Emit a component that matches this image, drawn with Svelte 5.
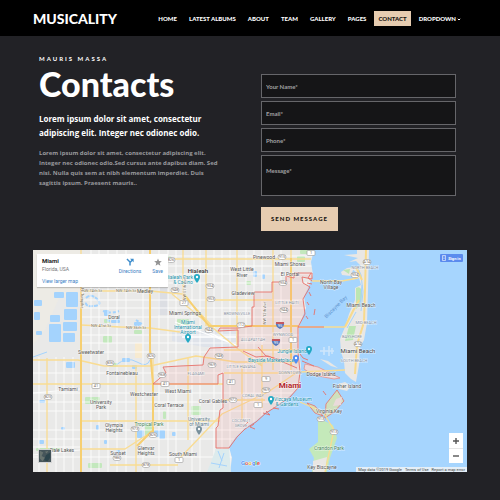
<script>
  const links = ['Home', 'Latest Albums', 'About', 'Team', 'Gallery', 'Pages', 'Contact', 'Dropdown'];

  const fields = [
    { id: 'name', label: 'Your Name*', type: 'text' },
    { id: 'email', label: 'Email*', type: 'email' },
    { id: 'phone', label: 'Phone*', type: 'tel' }
  ];

  // Minor street grid
  const streetsX = [39, 56, 64, 73, 91, 99, 108, 117, 126, 143, 159, 168, 176, 192, 200, 214, 222, 230, 246, 254, 262, 281];
  const streetsY = [256, 266, 274, 283, 300, 308, 317, 335, 343, 352, 373, 393, 402, 411, 430, 439, 457];

  const mainRoads = [
    'M81 250V472', 'M47 358V472', 'M150 250V345L153 384V435', 'M136 365V472', 'M183 250V300',
    'M206 250V326', 'M237 250V345', 'M273 250V370', 'M291 250V370', 'M188 358V440', 'M242 365V420',
    'M262 345V408', 'M33 360H78L104 366H150L196 356L236 362H298', 'M81 291H150L182 294L212 326H298',
    'M170 259H311', 'M33 384H223', 'M81 421H220', 'M81 449H125L153 431V358', 'M110 465H178',
    'M81 325L120 327L150 328L180 332', 'M172 294L206 322L238 349L262 366', 'M206 300H272',
    'M224 350H298', 'M224 373H298', 'M180 458L222 414L268 392L299 371', 'M222 400H265',
    'M298 327H345', 'M300 372L345 370', 'M312 281H342L358 278', 'M300 402L323 412L334 430L325 472'
  ];

  const water = [
    [34, 300, 8, 6], [34, 312, 6, 8], [54, 292, 10, 6], [66, 292, 12, 15], [64, 309, 13, 11], [50, 315, 10, 7],
    [49, 324, 12, 18], [63, 322, 14, 9], [63, 333, 12, 9], [36, 331, 6, 4], [104, 310, 5, 6], [111, 320, 9, 3],
    [134, 322, 7, 4], [137, 430, 7, 8], [154, 430, 5, 7], [159, 430, 6, 9], [96, 425, 3, 5], [66, 362, 9, 6],
    [122, 358, 8, 4], [61, 427, 4, 3], [132, 365, 5, 4], [39, 400, 6, 3], [253, 271, 4, 6], [262, 274, 3, 5],
    [104, 440, 3, 4], [116, 450, 4, 3], [39, 440, 5, 4], [172, 432, 4, 4]
  ];

  const parks = [
    [85, 397, 15, 7], [145, 424, 8, 12], [103, 336, 9, 7], [104, 319, 6, 4], [134, 330, 8, 4], [88, 463, 14, 5],
    [191, 406, 10, 9], [163, 411, 3, 8], [297, 256, 8, 6], [300, 250, 12, 4], [36, 448, 24, 3], [177, 319, 12, 6],
    [258, 361, 4, 4], [246, 281, 5, 4], [165, 256, 6, 4], [110, 363, 8, 4]
  ];

  const labels = [
    ['Hialeah', 198, 273, 'city'], ['Medley', 145, 293, 'town'], ['Doral', 114, 319, 'town'],
    ['Sweetwater', 91, 354, 'town'], ['Pinewood', 264, 259, 'town'], ['Miami Shores', 290, 266, 'town'],
    ['El Portal', 290, 276, 'town'], ['West Little', 242, 271, 'town'], ['River', 242, 277, 'town'],
    ['Gladeview', 243, 295, 'town'], ['Miami Springs', 185, 315, 'town'], ['Fontainebleau', 122, 375, 'town'],
    ['Tamiami', 68, 391, 'town'], ['Westchester', 144, 396, 'town'], ['West Miami', 178, 393, 'town'],
    ['Coral Terrace', 169, 407, 'town'], ['University', 101, 404, 'town'], ['Park', 101, 409, 'town'],
    ['Olympia', 114, 427, 'town'], ['Heights', 114, 432, 'town'], ['Tropical Park', 149, 426, 'green'],
    ['Sunset', 118, 455, 'town'], ['Glenvar', 146, 450, 'town'], ['Heights', 146, 455, 'town'],
    ['South Miami', 183, 456, 'town'], ['Dale Lakes', 62, 452, 'town'], ['Coral Gables', 213, 403, 'town'],
    ['University', 199, 421, 'school'], ['of Miami', 199, 426, 'school'], ['North Bay', 331, 284, 'town'],
    ['Village', 331, 289, 'town'], ['Miami Beach', 361, 307, 'town'], ['Miami Beach', 358, 353, 'big'],
    ['Dodge Island', 321, 376, 'town'], ['Fisher Island', 347, 388, 'town'], ['Virginia Key', 329, 413, 'town'],
    ['Crandon Park', 329, 450, 'green'], ['Key Biscayne', 322, 469, 'town'], ['Jungle Island', 292, 353, 'sight'],
    ['Bayside Marketplace', 271, 362, 'sight'], ['Vizcaya Museum', 293, 401, 'sight'],
    ['& Gardens', 287, 406, 'sight'], ['Miami', 188, 324, 'sight'], ['International', 188, 329, 'sight'],
    ['Airport', 188, 334, 'sight'], ['Hialeah Park', 179, 279, 'sight'], ['& Casino', 183, 284, 'sight'],
    ['BROWNSVILLE', 237, 315, 'area'], ['LITTLE HAITI', 287, 304, 'area'], ['ALLAPATTAH', 253, 341, 'area'],
    ['WYNWOOD', 283, 336, 'area'], ['LITTLE HAVANA', 241, 368, 'area'], ['FLAGAMI', 196, 375, 'area'],
    ['DOWNTOWN', 290, 374, 'area'], ['CORAL WAY', 253, 397, 'area'], ['COCONUT', 241, 422, 'area'],
    ['GROVE', 241, 427, 'area'], ['NORTH BEACH', 365, 269, 'area'], ['MID-BEACH', 366, 324, 'area'],
    ['BAYSHORE', 352, 338, 'area'], ['SOUTH BEACH', 354, 362, 'area'], ['NW 74th St', 92, 292, 'road'],
    ['NW 74th St', 126, 292, 'road'], ['NW 41st St', 101, 327, 'road'], ['NW 36th St', 136, 329, 'road'],
    ['Miami', 290, 388, 'main']
  ];

  const shields = [
    ['934', 210, 286], ['953', 211, 299], ['944', 209, 330], ['948', 219, 356], ['915', 282, 257], ['934', 283, 283],
    ['944', 284, 310], ['112', 241, 325], ['27', 184, 303], ['A1A', 367, 262], ['934', 355, 275], ['A1A', 358, 344],
    ['826', 151, 356], ['836', 110, 363], ['41', 96, 386], ['825', 48, 397], ['973', 135, 429], ['826', 153, 435],
    ['986', 117, 458], ['878', 146, 465], ['968', 162, 375], ['41', 165, 384], ['1', 179, 460], ['41', 231, 382],
    ['972', 233, 400], ['1', 258, 405], ['9', 266, 379], ['969', 266, 390], ['969', 212, 365], ['913', 321, 419],
    ['913', 334, 432], ['1', 311, 253], ['1', 293, 340], ['826', 171, 260], ['948', 175, 290]
  ];

  const pins = [[197, 278], [188, 338], [309, 350], [271, 400], [296, 359], [199, 430]];

  const city =
    'M312 273H294V278L286 276V282H272V292H254V307H252V326L238 328H220L218 331L238 330V347L210 348L204 357L203 365L180 366L163 367L166 373L153 384H218V375L223 373V408L220 410L218 426L216 428V448H229L237 437L245 429L256 422L266 413L274 408L290 397L298 388L300 372L298 352V327L305 314L303 299L310 287L303 283L302 277L312 279Z';
</script>

<svelte:head><title>Musicality</title></svelte:head>

<div class="page">
  <header>
    <a class="brand" href="#home">MUSICALITY</a>
    <nav>
      {#each links as link}
        <a href="#{link}" class:active={link === 'Contact'}>
          {link}{#if link === 'Dropdown'}<svg class="caret" viewBox="0 0 4 4"><path d="M0.8 1.8L2 3L3.2 1.8" /></svg>{/if}
        </a>
      {/each}
    </nav>
  </header>

  <main>
    <div class="columns">
      <section class="intro">
        <p class="eyebrow">MAURIS MASSA</p>
        <h1>Contacts</h1>
        <p class="lead">Lorem ipsum dolor sit amet, consectetur<br />adipiscing elit. Integer nec odionec odio.</p>
        <p class="copy">
          Lorem ipsum dolor sit amet, consectetur adipiscing elit.<br />Integer nec odionec odio.Sed cursus ante dapibus diam. Sed<br />nisi. Nulla quis sem at nibh elementum imperdiet. Duis<br />sagittis ipsum. Praesent mauris..
        </p>
      </section>

      <form onsubmit={(e) => e.preventDefault()}>
        {#each fields as f}
          <input id={f.id} type={f.type} placeholder={f.label} aria-label={f.label} />
        {/each}
        <textarea id="message" placeholder="Message*" aria-label="Message*"></textarea>
        <button class="send" type="submit">SEND MESSAGE</button>
      </form>
    </div>

    <div class="map">
      <svg class="canvas" viewBox="33 250 434 222" role="img" aria-label="Map of Miami">
        <rect x="33" y="250" width="434" height="222" fill="#e9e9e8" />
        <path d="M33 250H80V300L60 296L45 330L33 345Z" fill="#edebe5" />
        <rect x="135" y="343" width="7" height="15" fill="#f7ead0" />
        <rect x="158" y="288" width="10" height="27" fill="#dcdee3" />
        <path d="M172 331H236V347H204L172 341Z" fill="#dfe3ea" />
        {#each parks as [x, y, w, h]}<rect {x} {y} width={w} height={h} rx="1" fill="#c3e8bd" />{/each}
        {#each water as [x, y, w, h]}<rect {x} {y} width={w} height={h} rx="1" fill="#a4d3fd" />{/each}
        <g fill="none" stroke="#a4d3fd" stroke-width="2">
          <path d="M86 298Q91 293 97 299T94 306T86 302" stroke-dasharray="4 1" />
          <path d="M103 311Q111 314 119 311M107 320Q113 323 120 318M136 320L142 324" stroke-dasharray="3 2" />
          <path d="M116 365Q127 356 137 362T150 360M33 357L47 352" stroke-width="1" />
        </g>
        <g stroke="#fff" stroke-width="0.8">
          {#each streetsX as x}<path d="M{x} {x < 80 ? 357 : 250}V472" />{/each}
          {#each streetsY as y}<path d="M{y < 357 ? 81 : 33} {y}H312" />{/each}
          <path d="M33 455L80 450M33 447H80M33 393L80 389" fill="none" />
        </g>
        <path d="M175 322L236 345M182 337H236M208 332L233 344" stroke="#fff" stroke-width="1.3" />
        <path class="sea" d="M314 250L311 262L313 275L308 288L304 297L306 308L299 326V350L301 365L300 386L290 396L276 407L266 412L256 421L245 428L236 437L229 447L232 458L230 472H467V250Z" />
        <path d="M216 449H229L231 472H207Z" fill="#dcebed" />
        <path d="M218 451L222 461M224 453L219 468M211 463L227 466" stroke="#a4d3fd" fill="none" />

        <g class="isle">
          <path d="M357 250H369L368 290L367 323L364 340L360 347L359 365L356 382L351 379L345 373L344 361L341 352L340 339L345 327L349 314L355 300L355 288L361 285L359 278L352 280L357 273L352 269L361 266L356 261L349 262L358 258L344 255L357 254Z" />
          <path d="M341 272L347 268L354 267L351 276L342 275Z" />
          <path d="M338 384L345 382L351 386L347 391L339 389Z" />
          <path d="M305 364L318 367L340 378L334 379L313 375L304 369Z" fill="#edd9da" stroke="#ea8e88" />
          <path d="M320 359L328 361L338 368L331 366Z" />
          <path d="M318 418L333 425L337 438L330 458L327 472H312L314 458L309 449L318 442Z" fill="#c4e9ba" />
          <path d="M307 403L315 406L323 416L315 413ZM337 390L344 401L334 412L325 418L326 404Z" fill="#cfe0bd" stroke="#e6706a" />
          <path d="M313 461L327 457L325 472H313Z" />
        </g>
        <path d="M356 288Q362 285 362 295T356 309ZM349 326L356 326L353 340L345 341ZM343 270L350 269L349 274Z" fill="#bce6b3" />
        <path d="M336 399L342 397L341 405L333 406Z" fill="#eadadb" />
        <path d="M362 285L360 307M356 312L347 328M357 266L361 275L363 292L361 311" fill="none" stroke="#a4d3fd" />
        <path d="M320 351H334M324 347V355M329 346V356M332 348V354" stroke="#cfe6fb" stroke-width="1.5" />

        <g fill="none" stroke="#f9dc92" stroke-width="1.3" stroke-linejoin="round">
          {#each mainRoads as d}<path {d} />{/each}
        </g>
        <path d="M81 286V472M150 250V350L153 384V432M291 258V365M152 431L137 446M184 294L209 326H298" fill="none" stroke="#f6cf71" stroke-width="2" />
        <path d="M366 250L365 290L364 322L357 345L355 374M356 267L362 280M345 327L353 311L359 300" fill="none" stroke="#f8da8c" stroke-width="2" />

        <path d={city} fill="#f47b7b" fill-opacity="0.12" stroke="#e6706a" stroke-width="0.9" stroke-linejoin="round" />
        <g fill="none" stroke="#e6706a" stroke-width="0.9">
          <path d="M307 283L312 284M309 292L311 296M307 302L309 305M315 309L314 315M306 316L308 319M298 327H324M311 273L308 278L312 281" />
          <path d="M243 351L256 357L268 356L283 362L297 368M258 347L266 356L282 360M300 354L303 358L308 360" />
          <path d="M254 424L250 427L255 429M248 422L243 427M263 413L270 415L266 411M273 408L279 409M323 391L326 395M302 361L314 366" />
        </g>

        {#each shields as [name, x, y]}
          <rect class="shield" x={x - 4} y={y - 2.5} width="8" height="5" rx={name.length > 2 ? 2.5 : 1} />
          <text class="num" {x} y={y + 1.4}>{name}</text>
        {/each}
        {#each [[280, 325], [276, 342]] as [x, y]}
          <path d="M{x - 4} {y - 3}H{x + 4}Q{x + 5} {y + 2} {x} {y + 4}Q{x - 5} {y + 2} {x - 4} {y - 3}Z" fill="#5477bc" />
          <path d="M{x - 4} {y - 3}H{x + 4}V{y - 1}H{x - 4}Z" fill="#c45860" />
          <text class="num" {x} y={y + 2} style:fill="#fff">95</text>
        {/each}
        {#each labels as [name, x, y, kind]}<text class={kind} {x} {y}>{name}</text>{/each}
        <text class="bay" transform="translate(337 308) rotate(-45)">Biscayne Bay</text>
        <text class="road" transform="translate(81 298) rotate(90)">FL Turnpike</text>
        <text class="road" transform="translate(266 313) rotate(-90)">NW 12th Ave</text>
        <text class="road" transform="translate(186 289) rotate(-90)">NW 57th Ave</text>
        {#each pins as [x, y], i}
          <path d="M{x} {y + 5}Q{x - 3} {y + 1} {x - 3} {y - 1}A3 3 0 0 1 {x + 3} {y - 1}Q{x + 3} {y + 1} {x} {y + 5}Z" fill={i === 5 ? '#78909c' : i === 4 ? '#4e8df5' : '#22a9c4'} />
          <circle cx={x} cy={y - 1} r="1.2" fill="#fff" />
        {/each}
        <text class="google" x="241" y="465"><tspan fill="#4285f4">G</tspan><tspan fill="#ea4335">o</tspan><tspan fill="#fbbc05">o</tspan><tspan fill="#4285f4">g</tspan><tspan fill="#34a853">l</tspan><tspan fill="#ea4335">e</tspan></text>
      </svg>

      <div class="card">
        <div class="place">
          <strong>Miami</strong>
          <span>Florida, USA</span>
          <a href="#larger">View larger map</a>
        </div>
        <a class="action" href="#directions">
          <svg viewBox="0 0 10 10"><path d="M1.2 1.2L5 5V9.5M5 5.5L8 2.5" fill="none" stroke="#3c8ccc" stroke-width="1.8" /><path d="M5 0.8H9.5V5.2Z" fill="#3c8ccc" /></svg>
          Directions
        </a>
        <a class="action save" href="#save">
          <svg viewBox="0 0 10 10"><path d="M5 0.5L6.3 3.8L9.8 4L7.1 6.2L8 9.6L5 7.7L2 9.6L2.9 6.2L0.2 4L3.7 3.8Z" fill="#949494" /></svg>
          Save
        </a>
      </div>
      <button class="signin" type="button">
        <svg viewBox="0 0 4 6"><path d="M0.5 0.5H3.5V5.5H0.5ZM1.5 2H2.5M1.5 3.5H2.5" /></svg>Sign in
      </button>
      <button class="satellite" type="button" aria-label="Satellite view">
        <svg viewBox="0 0 14 14">
          <rect width="14" height="14" fill="#46555a" />
          <path d="M1 1L5 3L3 7L7 9L4 13L1 10ZM7 2L11 1L9 4Z" fill="#68736f" />
          <path d="M8 6L13 3V9L10 13L6 12Z" fill="#2c444c" />
        </svg>
      </button>
      <div class="zoom">
        <button type="button" aria-label="Zoom in"><svg viewBox="0 0 8 8"><path d="M4 1V7M1 4H7" /></svg></button>
        <button type="button" aria-label="Zoom out"><svg viewBox="0 0 8 8"><path d="M1 4H7" /></svg></button>
      </div>
      <div class="legal">
        <span>Map data ©2019 Google</span>
        <a href="#terms">Terms of Use</a>
        <a href="#report">Report a map error</a>
      </div>
    </div>
  </main>
</div>

<style>
  :global(body) {
    margin: 0;
    background: #222226;
  }
  .page {
    min-height: 100vh;
    background: #222226;
    color: #fff;
    font-family: Lato, 'Open Sans', sans-serif;
    overflow: hidden;
  }
  .page :global(*) {
    box-sizing: border-box;
  }
  a {
    color: inherit;
    text-decoration: none;
  }
  button {
    border: 0;
    padding: 0;
    font-family: inherit;
  }
  header {
    height: 36px;
    padding: 0 35px 0 33px;
    display: flex;
    align-items: center;
    justify-content: space-between;
    background: #000;
  }
  .brand {
    font-size: 14px;
    font-weight: 900;
  }
  nav {
    display: flex;
    gap: 4px;
  }
  nav a {
    padding: 0 4px;
    font-size: 6px;
    line-height: 15px;
    font-weight: 900;
    text-transform: uppercase;
    white-space: nowrap;
  }
  nav .active {
    background: #e6ccb0;
    color: #15120f;
  }
  .caret {
    width: 4px;
    height: 4px;
    margin-left: 1px;
    fill: none;
    stroke: #fff;
  }
  main {
    padding: 18px 33px 28px;
  }
  .columns {
    display: grid;
    grid-template-columns: 1fr 1fr;
    padding: 0 11px 0 6px;
    column-gap: 27px;
  }
  .intro {
    white-space: nowrap;
  }
  .intro p,
  h1 {
    margin: 0;
  }
  .eyebrow {
    font-size: 6px;
    line-height: 10px;
    font-weight: 700;
    letter-spacing: 2px;
  }
  h1 {
    font-size: 34px;
    line-height: 40px;
    font-weight: 900;
  }
  .intro .lead {
    margin-top: 8px;
    font-family: 'Open Sans', sans-serif;
    font-size: 8px;
    line-height: 14px;
    font-weight: 700;
  }
  .intro .copy {
    margin-top: 8px;
    font-family: 'Open Sans', sans-serif;
    font-size: 6px;
    line-height: 10px;
    font-weight: 700;
    color: #98989c;
  }
  form {
    display: flex;
    flex-direction: column;
    gap: 3px;
    padding-top: 20px;
  }
  input,
  textarea {
    display: block;
    width: 100%;
    height: 24px;
    margin: 0;
    padding: 0 4px;
    border: 1px solid #66666a;
    border-radius: 0;
    background: #151517;
    color: #fff;
    font-family: inherit;
    font-size: 6px;
    font-weight: 700;
  }
  textarea {
    height: 41px;
    padding-top: 11px;
    resize: none;
  }
  input::placeholder,
  textarea::placeholder {
    color: #a0a0a2;
    opacity: 1;
  }
  .send {
    align-self: flex-start;
    margin-top: 8px;
    padding: 0 10px;
    background: #e6ccb0;
    color: #15120f;
    font-size: 6px;
    line-height: 24px;
    font-weight: 900;
    letter-spacing: 1px;
  }
  .map {
    position: relative;
    margin-top: 19px;
    font-family: Roboto, sans-serif;
    color: #333;
  }
  .canvas {
    display: block;
    width: 100%;
  }
  .sea {
    fill: #a6d5fe;
  }
  .isle {
    fill: #e9e7e4;
    stroke-width: 0.8;
  }
  .canvas text {
    text-anchor: middle;
    font-size: 5px;
    fill: #555;
    stroke: #fff;
    stroke-width: 1px;
    stroke-opacity: 0.6;
    paint-order: stroke;
  }
  .canvas .city {
    font-size: 6px;
    font-weight: 500;
    fill: #333;
  }
  .canvas .big {
    font-size: 6px;
    fill: #444;
  }
  .canvas .main {
    font-size: 8px;
    font-weight: 700;
    fill: #b3262b;
  }
  .canvas .area {
    font-size: 4px;
    fill: #8790a0;
  }
  .canvas .road,
  .canvas .num {
    font-size: 4px;
    fill: #77705f;
  }
  .canvas .num {
    stroke: none;
  }
  .canvas .sight {
    fill: #2392ab;
  }
  .canvas .school {
    fill: #607d8b;
  }
  .canvas .green {
    fill: #47855c;
  }
  .canvas .bay {
    fill: #5c91cd;
    stroke: none;
  }
  .canvas .google {
    text-anchor: start;
    font-size: 6px;
    font-weight: 500;
  }
  .shield {
    fill: #fff;
    stroke: #999;
    stroke-width: 0.6;
  }
  .card {
    position: absolute;
    top: 4px;
    left: 4px;
    width: 131px;
    height: 33px;
    padding: 3px 5px;
    display: flex;
    background: #fff;
    box-shadow: 0 1px 1px rgb(0 0 0 / 0.2);
    font-size: 5px;
  }
  .place {
    flex: 1;
    display: flex;
    flex-direction: column;
    line-height: 8px;
  }
  .place strong {
    font-size: 6px;
    color: #222;
  }
  .place span {
    color: #777;
  }
  .place a {
    margin-top: 4px;
  }
  .card a {
    color: #3c80c4;
  }
  .action {
    display: flex;
    flex-direction: column;
    align-items: center;
    line-height: 8px;
  }
  .action svg {
    width: 8px;
    height: 8px;
    margin: 1px 0;
  }
  .save {
    margin-left: 5px;
    padding-left: 6px;
  }
  .signin {
    position: absolute;
    top: 4px;
    right: 4px;
    width: 23px;
    height: 8px;
    display: flex;
    align-items: center;
    justify-content: center;
    gap: 2px;
    border-radius: 1px;
    background: #5b8bee;
    color: #fff;
    font-size: 4px;
    font-weight: 700;
  }
  .signin svg {
    width: 4px;
    height: 6px;
    fill: none;
    stroke: #fff;
    stroke-width: 0.6;
  }
  .satellite {
    position: absolute;
    left: 5px;
    bottom: 9px;
    width: 14px;
    height: 14px;
    border: 1px solid #d5d5d5;
  }
  .satellite svg {
    display: block;
  }
  .zoom {
    position: absolute;
    right: 4px;
    bottom: 9px;
    width: 14px;
    background: #fff;
  }
  .zoom button {
    display: flex;
    align-items: center;
    justify-content: center;
    width: 14px;
    height: 15px;
    background: none;
  }
  .zoom button + button {
    border-top: 1px solid #e6e6e6;
  }
  .zoom svg {
    width: 8px;
    height: 8px;
    stroke: #555;
    stroke-width: 1.4;
  }
  .legal {
    position: absolute;
    right: 0;
    bottom: 0;
    padding: 0 2px;
    display: flex;
    gap: 3px;
    background: rgb(245 245 245 / 0.8);
    font-size: 4px;
    line-height: 5px;
    color: #444;
    white-space: nowrap;
  }
</style>
